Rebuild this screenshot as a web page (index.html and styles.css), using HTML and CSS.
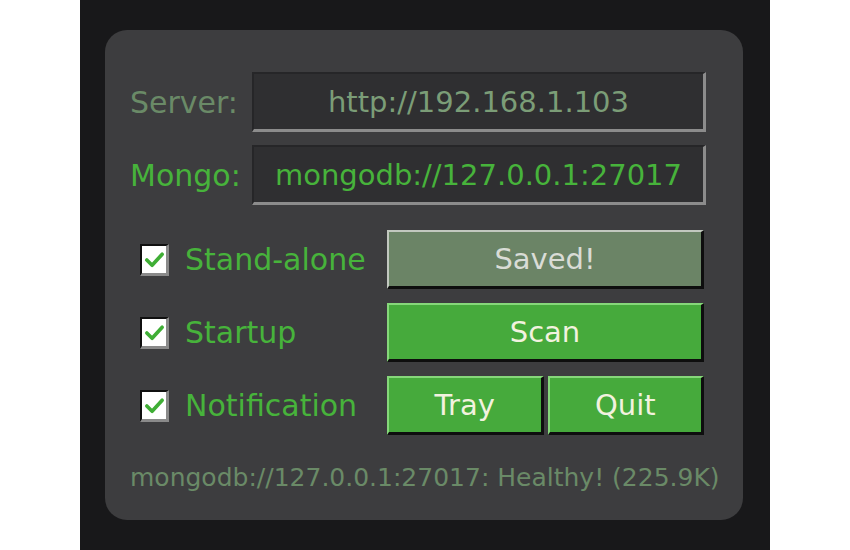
FILE: index.html
```html
<!DOCTYPE html>
<html>
<head>
<meta charset="utf-8">
<link rel="stylesheet" href="styles.css">
</head>
<body>
<div class="frame">
  <div class="card">
    <div class="row field-row">
      <span class="label muted">Server:</span>
      <div class="input muted-text">http://192.168.1.103</div>
    </div>
    <div class="row field-row second">
      <span class="label bright">Mongo:</span>
      <div class="input bright">mongodb://127.0.0.1:27017</div>
    </div>
    <div class="row opt-row first-opt">
      <div class="opt">
        <span class="check"><svg viewBox="0 0 24 24" width="23" height="23"><path d="M4 12.5 L9.5 18 L20 6.5" fill="none" stroke="#3fae35" stroke-width="3.8" stroke-linecap="round" stroke-linejoin="round"/></svg></span>
        <span class="opt-label">Stand-alone</span>
      </div>
      <div class="btn saved">Saved!</div>
    </div>
    <div class="row opt-row">
      <div class="opt">
        <span class="check"><svg viewBox="0 0 24 24" width="23" height="23"><path d="M4 12.5 L9.5 18 L20 6.5" fill="none" stroke="#3fae35" stroke-width="3.8" stroke-linecap="round" stroke-linejoin="round"/></svg></span>
        <span class="opt-label">Startup</span>
      </div>
      <div class="btn green">Scan</div>
    </div>
    <div class="row opt-row">
      <div class="opt">
        <span class="check"><svg viewBox="0 0 24 24" width="23" height="23"><path d="M4 12.5 L9.5 18 L20 6.5" fill="none" stroke="#3fae35" stroke-width="3.8" stroke-linecap="round" stroke-linejoin="round"/></svg></span>
        <span class="opt-label">Notification</span>
      </div>
      <div class="btn-pair">
        <div class="btn green half">Tray</div>
        <div class="btn green half">Quit</div>
      </div>
    </div>
    <div class="status">mongodb://127.0.0.1:27017: Healthy! (225.9K)</div>
  </div>
</div>
</body>
</html>
```

FILE: styles.css
```css
html, body {
  margin: 0;
  padding: 0;
  background: #ffffff;
}
body {
  font-family: "DejaVu Sans", "Liberation Sans", sans-serif;
}
.frame {
  margin-left: 80px;
  width: 690px;
  height: 550px;
  background: #18181a;
  padding: 30px 0 0 25px;
  box-sizing: border-box;
}
.card {
  width: 638px;
  height: 490px;
  background: #3d3d3f;
  border-radius: 22px;
  box-sizing: border-box;
  padding: 42px 0 0 25px;
}
.row {
  display: flex;
  align-items: center;
}
.field-row.second {
  margin-top: 13px;
}
.label {
  width: 122px;
  font-size: 30px;
}
.muted { color: #6a8a67; }
.muted-text { color: #7b9d77; }
.bright { color: #47b33b; }
.input {
  width: 454px;
  height: 60px;
  box-sizing: border-box;
  background: #2f2f31;
  border-top: 2px solid #262628;
  border-left: 2px solid #262628;
  border-right: 3px solid #8c8c8c;
  border-bottom: 3px solid #8c8c8c;
  display: flex;
  align-items: center;
  justify-content: center;
  font-size: 29px;
}
.opt-row {
  margin-top: 14px;
}
.opt-row.first-opt {
  margin-top: 25px;
}
.opt {
  width: 257px;
  display: flex;
  align-items: center;
}
.check {
  margin-left: 10px;
  width: 29px;
  height: 32px;
  box-sizing: border-box;
  background: #ffffff;
  border-top: 2px solid #101010;
  border-left: 2px solid #101010;
  border-right: 3px solid #8a8a8a;
  border-bottom: 3px solid #8a8a8a;
  display: flex;
  align-items: center;
  justify-content: center;
}
.opt-label {
  margin-left: 16px;
  font-size: 30px;
  color: #47b33b;
}
.btn {
  width: 317px;
  height: 59px;
  box-sizing: border-box;
  display: flex;
  align-items: center;
  justify-content: center;
  font-size: 29px;
  border-top: 2px solid;
  border-left: 2px solid;
  border-right: 3px solid #0e0e0e;
  border-bottom: 3px solid #0e0e0e;
}
.saved {
  background: #6b8466;
  color: #d9dcd6;
  border-top-color: #c2c8bf;
  border-left-color: #c2c8bf;
}
.green {
  background: #46aa3c;
  color: #f2f2df;
  border-top-color: #86d77a;
  border-left-color: #86d77a;
}
.btn-pair {
  display: flex;
  gap: 4px;
  width: 317px;
}
.half {
  flex: 1;
  width: auto;
}
.status {
  margin-top: 28px;
  font-size: 25px;
  color: #6a8a67;
}
```
